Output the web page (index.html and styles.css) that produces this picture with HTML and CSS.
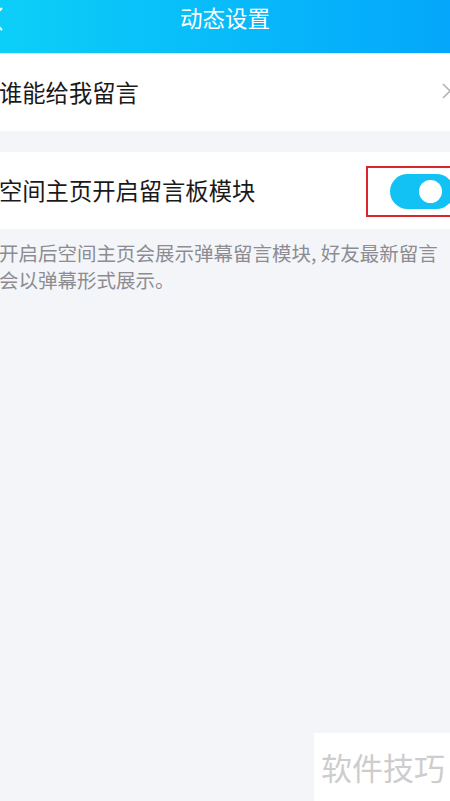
FILE: index.html
```html
<!DOCTYPE html>
<html lang="zh-CN">
<head>
  <meta charset="UTF-8" />
  <meta name="viewport" content="width=450, height=801" />
  <title>动态设置</title>
  <link rel="stylesheet" href="styles.css">
</head>
<body>
  <div class="header">
    <svg class="back" width="16" height="26" viewBox="0 0 16 26">
      <path d="M14 2 L3 13 L14 24" fill="none" stroke="#ffffff" stroke-width="2" />
    </svg>
    <div class="title">动态设置</div>
  </div>

  <div class="row row-link">
    <span class="label">谁能给我留言</span>
    <svg class="arrow" width="10" height="16" viewBox="0 0 10 16">
      <path d="M1 1 L8 8 L1 15" fill="none" stroke="#b4b4b8" stroke-width="1.6" />
    </svg>
  </div>

  <div class="gap"></div>

  <div class="row row-switch">
    <span class="label">空间主页开启留言板模块</span>
    <div class="switch-box">
      <div class="switch">
        <div class="knob"></div>
      </div>
    </div>
  </div>

  <p class="desc">开启后空间主页会展示弹幕留言模块, 好友最新留言会以弹幕形式展示。</p>

  <div class="watermark">软件技巧</div>
</body>
</html>
```

FILE: styles.css
```css
body {
  margin: 0;
  padding: 0;
  width: 450px;
  height: 801px;
  background: #f4f5f9;
  font-family: "Noto Sans CJK SC", "Noto Sans", sans-serif;
  overflow: hidden;
  position: relative;
}

.header {
  height: 53px;
  background: linear-gradient(90deg, #0ccff8, #04a7fb);
  display: flex;
  align-items: center;
  justify-content: center;
  position: relative;
  border-bottom: 1px solid #d8f2fc;
}

.back {
  position: absolute;
  left: -12px;
  top: 6px;
}

.title {
  color: #ffffff;
  font-size: 22.5px;
  line-height: 1;
  margin-top: -19px;
}

.row {
  background: #ffffff;
  display: flex;
  align-items: center;
  justify-content: space-between;
  overflow: hidden;
}

.row-link {
  height: 77px;
}

.row-switch {
  height: 77px;
}

.label {
  font-size: 23.3px;
  color: #1a1a1a;
  margin-left: -1px;
  line-height: 1;
}

.arrow {
  margin-right: -2px;
  margin-top: -3px;
}

.gap {
  height: 21px;
}

.switch-box {
  width: 84px;
  height: 51px;
  border: 2px solid #d8262c;
  border-right: none;
  box-sizing: border-box;
  margin-top: 2px;
  display: flex;
  align-items: center;
  padding-left: 22px;
}

.switch {
  width: 64px;
  height: 35px;
  flex-shrink: 0;
  border-radius: 18px;
  background: #13c2f4;
  position: relative;
}

.knob {
  position: absolute;
  left: 29px;
  top: 6px;
  width: 23px;
  height: 23px;
  border-radius: 50%;
  background: #ffffff;
}

.desc {
  margin: 10px 0 0 -1px;
  font-size: 19.5px;
  line-height: 27px;
  color: #8c8c92;
}

.watermark {
  position: absolute;
  left: 314px;
  top: 733px;
  width: 136px;
  height: 68px;
  background: #ffffff;
  color: #cdcdcd;
  font-size: 31px;
  line-height: 68px;
  padding-left: 7px;
  box-sizing: border-box;
  white-space: nowrap;
}
```
